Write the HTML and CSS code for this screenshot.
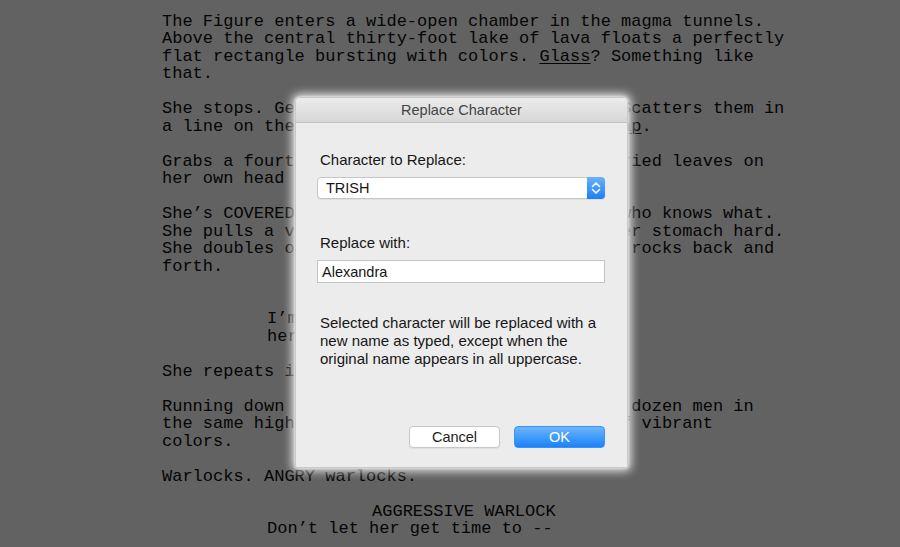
FILE: index.html
```html
<!DOCTYPE html>
<html lang="en">
<head>
<meta charset="utf-8">
<title>Replace Character</title>
<link rel="stylesheet" href="styles.css">
</head>
<body>
<div class="page">
<pre class="script">The Figure enters a wide-open chamber in the magma tunnels.
Above the central thirty-foot lake of lava floats a perfectly
flat rectangle bursting with colors. <u>Glass</u>? Something like
that.

She stops. Ge                                Scatters them in
a line on the                                <u>ap</u>.

Grabs a fourt                                ried leaves on
her own head

She’s COVERED                                who knows what.
She pulls a v                                er stomach hard.
She doubles o                                 rocks back and
forth.


          <span class="dl">I’m</span>
          <span class="dl">her</span>

She repeats i

Running down                                  dozen men in
the same high                                f vibrant
colors.

Warlocks. ANGRY warlocks.

                    <span class="cue">AGGRESSIVE WARLOCK</span>
          <span class="dl">Don’t let her get time to --</span></pre>
</div>

<div class="dialog">
  <div class="titlebar">Replace Character</div>
  <div class="dialog-body">
    <div class="label">Character to Replace:</div>
    <div class="popup">
      <span class="popup-value">TRISH</span>
      <span class="stepper">
        <svg width="18" height="20" viewBox="0 0 18 20">
          <polyline points="5.5,8.5 9,5 12.5,8.5" fill="none" stroke="#fff" stroke-width="1.6" stroke-linecap="round" stroke-linejoin="round"/>
          <polyline points="5.5,11.5 9,15 12.5,11.5" fill="none" stroke="#fff" stroke-width="1.6" stroke-linecap="round" stroke-linejoin="round"/>
        </svg>
      </span>
    </div>
    <div class="label label-second">Replace with:</div>
    <div class="field">Alexandra</div>
    <p class="note">Selected character will be replaced with a new name as typed, except when the original name appears in all uppercase.</p>
    <div class="buttons">
      <div class="btn btn-cancel">Cancel</div>
      <div class="btn btn-ok">OK</div>
    </div>
  </div>
</div>
</body>
</html>
```
FILE: styles.css
```css
html, body {
  margin: 0;
  padding: 0;
}

body {
  width: 900px;
  height: 547px;
  overflow: hidden;
  background: #626262;
  position: relative;
}

.page {
  padding: 12.5px 0 0 162px;
}

.script {
  margin: 0;
  font-family: "Liberation Mono", "Courier New", monospace;
  font-size: 17px;
  line-height: 17.5px;
  color: #050505;
  white-space: pre;
}

.script u {
  text-decoration-thickness: 1px;
  text-underline-offset: 2px;
}

.dl {
  margin-left: 3px;
}

.cue {
  margin-left: 6px;
}

.dialog {
  position: absolute;
  left: 295px;
  top: 97px;
  width: 333px;
  height: 371px;
  box-sizing: border-box;
  border: 1px solid #c9c9c9;
  border-radius: 5px 5px 2px 2px;
  background: #ececec;
  box-shadow: 0 0 10px 3px rgba(255, 255, 255, 0.85), 0 0 3px rgba(255, 255, 255, 0.9);
  display: flex;
  flex-direction: column;
  font-family: "Liberation Sans", Arial, sans-serif;
  color: #161616;
}

.titlebar {
  height: 24px;
  border-bottom: 1px solid #c2c2c2;
  border-radius: 4px 4px 0 0;
  background: linear-gradient(#ececec, #d6d6d6);
  display: flex;
  align-items: center;
  justify-content: center;
  font-size: 14.5px;
  color: #444;
}

.dialog-body {
  flex: 1;
  display: flex;
  flex-direction: column;
  padding: 28px 22px 19px 21px;
}

.label {
  font-size: 15px;
  line-height: 18px;
  margin-left: 3px;
}

.label-second {
  margin-top: 35px;
}

.popup {
  margin-top: 8px;
  height: 22px;
  box-sizing: border-box;
  border: 1px solid #c6c6c6;
  border-radius: 4px;
  background: #fff;
  display: flex;
  align-items: center;
  box-shadow: 0 1px 1px rgba(0, 0, 0, 0.06);
}

.popup-value {
  flex: 1;
  padding-left: 8px;
  font-size: 14.5px;
  color: #161616;
}

.stepper {
  width: 18px;
  height: 22px;
  margin: -1px -1px -1px 0;
  border-radius: 0 4px 4px 0;
  background: linear-gradient(#69b1fa, #1c7ff7);
  display: flex;
  align-items: center;
  justify-content: center;
}

.field {
  margin-top: 8px;
  height: 23px;
  box-sizing: border-box;
  border: 1px solid #c4c4c4;
  background: #fff;
  padding-left: 4px;
  display: flex;
  align-items: center;
  font-size: 14.5px;
  color: #161616;
}

.note {
  margin: 31px 0 0 3px;
  font-size: 15px;
  line-height: 18px;
}

.buttons {
  margin-top: auto;
  display: flex;
  justify-content: flex-end;
  gap: 14px;
}

.btn {
  width: 91px;
  height: 22px;
  box-sizing: border-box;
  border-radius: 4px;
  display: flex;
  align-items: center;
  justify-content: center;
  font-size: 14.5px;
}

.btn-cancel {
  background: #fff;
  border: 1px solid #c8c8c8;
  color: #222;
  box-shadow: 0 1px 1px rgba(0, 0, 0, 0.06);
}

.btn-ok {
  background: linear-gradient(#6cb5fb, #1b82f9);
  border: 1px solid #3d92f2;
  color: #fff;
}
```
